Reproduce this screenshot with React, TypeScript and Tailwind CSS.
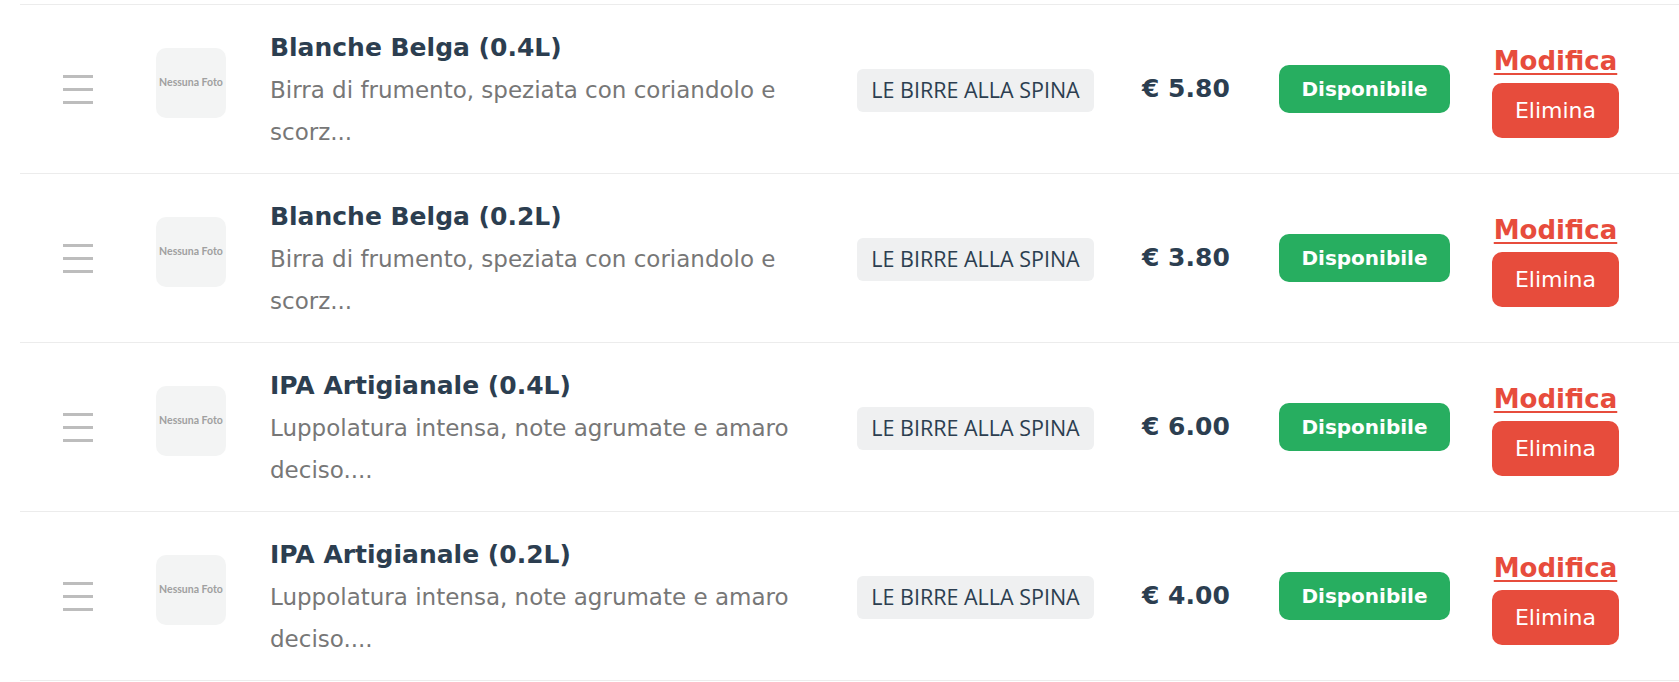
const items = [
  {
    name: 'Blanche Belga (0.4L)',
    description: 'Birra di frumento, speziata con coriandolo e scorz...',
    category: 'LE BIRRE ALLA SPINA',
    price: '5.80',
  },
  {
    name: 'Blanche Belga (0.2L)',
    description: 'Birra di frumento, speziata con coriandolo e scorz...',
    category: 'LE BIRRE ALLA SPINA',
    price: '3.80',
  },
  {
    name: 'IPA Artigianale (0.4L)',
    description: 'Luppolatura intensa, note agrumate e amaro deciso....',
    category: 'LE BIRRE ALLA SPINA',
    price: '6.00',
  },
  {
    name: 'IPA Artigianale (0.2L)',
    description: 'Luppolatura intensa, note agrumate e amaro deciso....',
    category: 'LE BIRRE ALLA SPINA',
    price: '4.00',
  },
];

type Item = (typeof items)[number];

const DragHandle = () => (
  <div className="flex flex-col gap-[10px]">
    <div className="w-[30px] h-[3px] bg-[#bdbdbd]" />
    <div className="w-[30px] h-[3px] bg-[#bdbdbd]" />
    <div className="w-[30px] h-[3px] bg-[#bdbdbd]" />
  </div>
);

const ItemRow = ({ item }: { item: Item }) => (
  <div className="flex items-center h-[169px] border-b border-[#ececec] font-['DejaVu_Sans',sans-serif]">
    {/* Drag handle */}
    <div className="w-[116px] flex justify-center">
      <DragHandle />
    </div>

    {/* Photo placeholder */}
    <div className="ml-[20px] mb-[12px] w-[70px] h-[70px] rounded-[10px] bg-[#f3f4f4] flex items-center justify-center">
      <span className="font-['Lato',sans-serif] text-[10.5px] font-bold text-[#a0a0a0]">Nessuna Foto</span>
    </div>

    {/* Name + description */}
    <div className="ml-[44px] w-[560px] pt-[4px] flex flex-col">
      <span className="text-[25px] leading-[38px] font-bold text-[#2c3e50]">{item.name}</span>
      <span className="mt-[2px] text-[23px] leading-[42px] text-[#777777]">{item.description}</span>
    </div>

    {/* Category */}
    <div className="ml-[27px] mt-[3px] w-[237px] h-[43px] rounded-[6px] bg-[#eff0f1] flex items-center justify-center">
      <span className="font-['Open_Sans',sans-serif] text-[21.5px] text-[#2c3e50]">{item.category}</span>
    </div>

    {/* Price */}
    <div className="ml-[48px] w-[137px]">
      <span className="text-[25px] font-bold text-[#2c3e50]">€ {item.price}</span>
    </div>

    {/* Status */}
    <button className="w-[171px] h-[48px] rounded-[10px] bg-[#27ae60] text-white text-[20px] font-bold flex items-center justify-center">
      Disponibile
    </button>

    {/* Actions */}
    <div className="ml-[42px] w-[127px] pt-[5px] flex flex-col items-center">
      <a className="text-[26px] leading-[31px] font-bold text-[#e74c3c] underline decoration-2 underline-offset-[3px] cursor-pointer">
        Modifica
      </a>
      <button className="mt-[6px] w-[127px] h-[55px] rounded-[10px] bg-[#e74c3c] text-white text-[22px] flex items-center justify-center">
        Elimina
      </button>
    </div>
  </div>
);

export default function App() {
  return (
    <div className="min-h-screen bg-white pt-[4px] pl-[20px]">
      <div className="border-t border-[#ececec]">
        {items.map((item, i) => (
          <ItemRow key={i} item={item} />
        ))}
      </div>
    </div>
  );
}
